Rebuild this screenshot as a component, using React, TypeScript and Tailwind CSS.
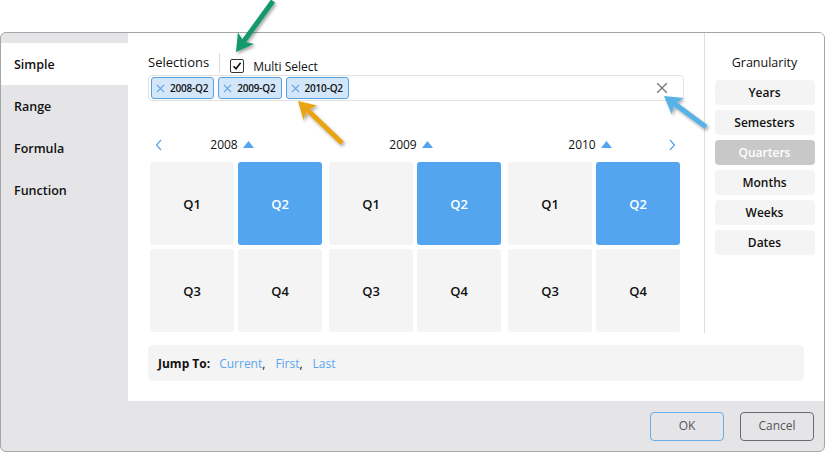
import React from 'react';

const font = { fontFamily: '"Open Sans", "Noto Sans", sans-serif' };

type Pt = [number, number];

// Annotation arrow drawn over the dialog
const Arrow = ({ tail, tip, color }: { tail: Pt; tip: Pt; color: string }) => {
  const dx = tip[0] - tail[0];
  const dy = tip[1] - tail[1];
  const len = Math.hypot(dx, dy);
  const ux = dx / len;
  const uy = dy / len;
  const px = -uy;
  const py = ux;
  const headLen = 17;
  const headW = 10;
  const base: Pt = [tip[0] - ux * headLen, tip[1] - uy * headLen];
  const pts = [
    tip,
    [base[0] + px * headW, base[1] + py * headW],
    [base[0] + ux * 4, base[1] + uy * 4],
    [base[0] - px * headW, base[1] - py * headW],
  ]
    .map((p) => p.join(','))
    .join(' ');
  return (
    <g filter="url(#shadow)">
      <line x1={tail[0]} y1={tail[1]} x2={base[0] + ux * 5} y2={base[1] + uy * 5} stroke={color} strokeWidth={5} />
      <polygon points={pts} fill={color} />
    </g>
  );
};

const XIcon = ({ size = 10, color = '#5b9fe0', w = 1.2 }: { size?: number; color?: string; w?: number }) => (
  <svg width={size} height={size} viewBox="0 0 10 10">
    <path d="M1 1 L9 9 M9 1 L1 9" stroke={color} strokeWidth={w} fill="none" />
  </svg>
);

const Chip = ({ label }: { label: string }) => (
  <div className="flex items-center gap-[5px] h-[22px] px-[4px] rounded-[3px] border border-[#5b9fe0] bg-[#d3e6fa] text-[10px] font-semibold text-[#111] tracking-[-0.2px]">
    <XIcon size={9} />
    <span className="pr-[1px] pt-[1px]">{label}</span>
  </div>
);

const Tile = ({ label, active }: { label: string; active?: boolean }) => (
  <div
    className={
      'flex items-center justify-center pt-[3px] rounded-[3px] text-[13px] font-semibold ' +
      (active ? 'bg-[#52a5ee] text-white' : 'bg-[#f4f4f4] text-[#111]')
    }
  >
    {label}
  </div>
);

const YearGroup = ({ active }: { active: string }) => (
  <div className="grid grid-cols-2 grid-rows-[83px_83px] gap-[4px] w-[172px]">
    {['Q1', 'Q2', 'Q3', 'Q4'].map((q) => (
      <Tile key={q} label={q} active={q === active} />
    ))}
  </div>
);

const UpTri = () => (
  <svg width="11" height="7" viewBox="0 0 11 7" className="ml-[5px] mb-[2px]">
    <polygon points="5.5,0 11,7 0,7" fill="#52a5ee" />
  </svg>
);

const App: React.FC = () => {
  const tabs = ['Simple', 'Range', 'Formula', 'Function'];
  const gran = ['Years', 'Semesters', 'Quarters', 'Months', 'Weeks', 'Dates'];

  return (
    <div className="relative w-[825px] h-[452px] bg-white overflow-hidden text-[#111]" style={font}>
      <div className="mt-[32px] w-[825px] h-[420px] border border-[#a6a6a6] rounded-[6px] bg-[#e5e5e8] flex flex-col overflow-hidden">
        <div className="flex h-[368px]">
          {/* Sidebar tabs */}
          <div className="w-[127px] pt-[10px] flex flex-col">
            {tabs.map((t, i) => (
              <div
                key={t}
                className={
                  'h-[42px] flex items-center pl-[13px] pt-[3px] text-[12.5px] font-semibold ' +
                  (i === 0 ? 'bg-white' : '')
                }
              >
                {t}
              </div>
            ))}
          </div>

          {/* Main white area */}
          <div className="flex-1 bg-white flex flex-col">
            <div className="flex h-[300px]">
              <div className="flex-1 pl-[20px] pr-[20px] pt-[20px]">
                <div className="flex items-center h-[20px]">
                  <span className="text-[13px] font-medium">Selections</span>
                  <div className="w-px h-[20px] bg-[#dcdcdc] ml-[10px] mr-[10px]" />
                  <div className="mt-[6px] flex items-center">
                    <div className="w-[14px] h-[14px] border border-[#333] rounded-[2px] flex items-center justify-center">
                      <svg width="10" height="10" viewBox="0 0 10 10">
                        <path d="M1.5 5.2 L4 7.8 L8.6 1.8" stroke="#111" strokeWidth="1.6" fill="none" />
                      </svg>
                    </div>
                    <span className="ml-[9px] text-[12px] pt-[1px]">Multi Select</span>
                  </div>
                </div>
                <div className="mt-[2px] h-[26px] border border-[#e2e2e2] rounded-[4px] flex items-center pl-[2px] pr-[15px] gap-[4px]">
                  <Chip label="2008-Q2" />
                  <Chip label="2009-Q2" />
                  <Chip label="2010-Q2" />
                  <div className="flex-1" />
                  <XIcon size={12} color="#777" w={1.1} />
                </div>

                {/* Year navigation */}
                <div className="mt-[34px] h-[20px] flex items-center text-[12px]">
                  <div className="w-[172px] flex items-center relative">
                    <svg width="8" height="12" viewBox="0 0 8 12" className="absolute left-[7px]">
                      <path d="M6 1 L1.5 6 L6 11" stroke="#52a5ee" strokeWidth="1.2" fill="none" />
                    </svg>
                    <div className="flex-1 flex items-center justify-center pr-[4px]">
                      2008
                      <UpTri />
                    </div>
                  </div>
                  <div className="w-[172px] ml-[7px] flex items-center justify-center pr-[4px]">
                    2009
                    <UpTri />
                  </div>
                  <div className="w-[172px] ml-[7px] flex items-center relative">
                    <div className="flex-1 flex items-center justify-center pr-[4px]">
                      2010
                      <UpTri />
                    </div>
                    <svg width="8" height="12" viewBox="0 0 8 12" className="absolute right-[2px]">
                      <path d="M2 1 L6.5 6 L2 11" stroke="#52a5ee" strokeWidth="1.2" fill="none" />
                    </svg>
                  </div>
                </div>

                <div className="mt-[7px] flex gap-[7px] pl-[2px]">
                  <YearGroup active="Q2" />
                  <YearGroup active="Q2" />
                  <YearGroup active="Q2" />
                </div>
              </div>

              {/* Granularity */}
              <div className="w-[120px] border-l border-[#dedede] flex flex-col items-center pt-[20px]">
                <div className="h-[20px] flex items-center text-[12.5px] font-medium">Granularity</div>
                <div className="mt-[7px] flex flex-col gap-[5px]">
                  {gran.map((g) => (
                    <div
                      key={g}
                      className={
                        'w-[100px] h-[25px] rounded-[4px] flex items-center justify-center pt-[1px] text-[12px] font-semibold ' +
                        (g === 'Quarters' ? 'bg-[#c8c8c8] text-white' : 'bg-[#f4f4f4] text-[#111]')
                      }
                    >
                      {g}
                    </div>
                  ))}
                </div>
              </div>
            </div>

            {/* Jump To */}
            <div className="mt-[12px] mx-[20px] h-[36px] rounded-[5px] bg-[#f4f4f4] flex items-center pl-[10px] pt-[2px] text-[12px]">
              <span className="font-bold">Jump To:</span>
              <span className="ml-[9px] text-[#5aa6f0]">Current</span>
              <span>,</span>
              <span className="ml-[10px] text-[#5aa6f0]">First</span>
              <span>,</span>
              <span className="ml-[10px] text-[#5aa6f0]">Last</span>
            </div>
          </div>
        </div>

        {/* Footer */}
        <div className="flex-1 flex items-center justify-end gap-[16px] pr-[10px]">
          <button className="w-[74px] h-[29px] rounded-[4px] border border-[#6aaee8] text-[12px] text-[#555]">OK</button>
          <button className="w-[74px] h-[29px] rounded-[4px] border border-[#6c6c6c] text-[12px] text-[#555]">Cancel</button>
        </div>
      </div>

      {/* Annotation arrows */}
      <svg className="absolute inset-0 pointer-events-none" width="825" height="452">
        <defs>
          <filter id="shadow" x="-50%" y="-50%" width="200%" height="200%">
            <feDropShadow dx="1.5" dy="2" stdDeviation="1.5" floodColor="#000" floodOpacity="0.35" />
          </filter>
        </defs>
        <Arrow tail={[273, 1]} tip={[236, 52]} color="#17996b" />
        <Arrow tail={[342, 143]} tip={[298, 101]} color="#e9a413" />
        <Arrow tail={[706, 127]} tip={[664, 96]} color="#58b2e6" />
      </svg>
    </div>
  );
};

export default App;
